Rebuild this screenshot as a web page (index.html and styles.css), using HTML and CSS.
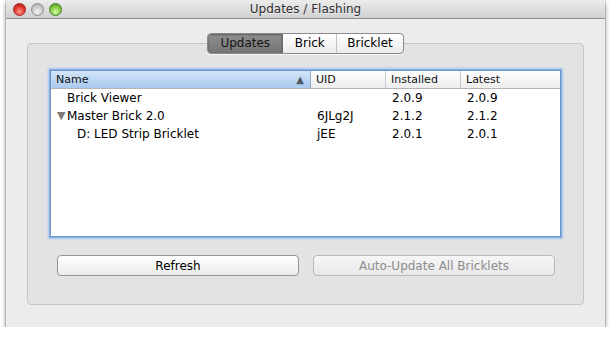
FILE: index.html
```html
<!DOCTYPE html>
<html lang="en">
<head>
    <meta charset="UTF-8">
    <title>Updates / Flashing</title>
    <link rel="stylesheet" href="styles.css">
</head>
<body>
    <div class="window">
        <div class="titlebar">
            <div class="lights">
                <span class="light red"></span>
                <span class="light grey"></span>
                <span class="light green"></span>
            </div>
            <span class="title">Updates / Flashing</span>
        </div>
        <div class="content">
            <div class="group">
                <div class="tabs">
                    <span class="tab active">Updates</span>
                    <span class="tab">Brick</span>
                    <span class="tab">Bricklet</span>
                </div>
                <div class="tree">
                    <div class="head">
                        <div class="hcell sorted">Name <span class="sort">&#9650;</span></div>
                        <div class="hcell">UID</div>
                        <div class="hcell">Installed</div>
                        <div class="hcell last">Latest</div>
                    </div>
                    <div class="row">
                        <div class="cell lvl1">Brick Viewer</div>
                        <div class="cell"></div>
                        <div class="cell">2.0.9</div>
                        <div class="cell">2.0.9</div>
                    </div>
                    <div class="row">
                        <div class="cell lvl1"><span class="arrow">&#9660;</span>Master Brick 2.0</div>
                        <div class="cell">6JLg2J</div>
                        <div class="cell">2.1.2</div>
                        <div class="cell">2.1.2</div>
                    </div>
                    <div class="row">
                        <div class="cell lvl2">D: LED Strip Bricklet</div>
                        <div class="cell">jEE</div>
                        <div class="cell">2.0.1</div>
                        <div class="cell">2.0.1</div>
                    </div>
                </div>
                <div class="buttons">
                    <button class="btn">Refresh</button>
                    <button class="btn disabled">Auto-Update All Bricklets</button>
                </div>
            </div>
        </div>
    </div>
</body>
</html>
```

FILE: styles.css
```css
body {
    margin: 0;
    background: #fff;
    font-family: "DejaVu Sans", sans-serif;
    font-size: 12px;
    color: #000;
}
.window {
    margin-left: 6px;
    width: 599px;
    height: 327px;
    background: #ececec;
    box-shadow: 0 0 0 1px rgba(0, 0, 0, 0.12), 0 3px 5px rgba(0, 0, 0, 0.45);
    display: flex;
    flex-direction: column;
}
.titlebar {
    height: 18px;
    border-bottom: 1px solid #8f8f8f;
    background: linear-gradient(#ececec, #d0d0d0);
    display: flex;
    align-items: center;
    justify-content: center;
    position: relative;
}
.title {
    color: #2e2e2e;
    font-size: 12px;
    text-shadow: 0 1px 0 rgba(255, 255, 255, 0.6);
}
.lights {
    position: absolute;
    left: 7px;
    top: 3px;
    display: flex;
    gap: 5px;
}
.light {
    width: 13px;
    height: 13px;
    border-radius: 50%;
    box-sizing: border-box;
}
.red {
    background: radial-gradient(circle at 50% 70%, #ff9a8a, #e0342a 55%, #a8130e);
    border: 1px solid #9a2a22;
}
.grey {
    background: radial-gradient(circle at 50% 70%, #f4f4f4, #c9c9c9 55%, #a0a0a0);
    border: 1px solid #8e8e8e;
}
.green {
    background: radial-gradient(circle at 50% 70%, #d6f7a8, #7ec63c 55%, #3f8a17);
    border: 1px solid #4a7f2a;
}
.content {
    flex: 1;
    padding: 24px 21px 22px 21px;
    display: flex;
}
.group {
    flex: 1;
    background: #e3e3e3;
    border: 1px solid #c6c6c6;
    border-radius: 4px;
    display: flex;
    flex-direction: column;
    align-items: center;
}
.tabs {
    margin-top: -11px;
    display: flex;
    border: 1px solid #8a8a8a;
    border-radius: 4px;
    background: linear-gradient(#ffffff, #ececec);
    box-shadow: 0 1px 0 rgba(255, 255, 255, 0.7);
    overflow: hidden;
}
.tab {
    height: 19px;
    line-height: 19px;
    padding: 0 10px;
    border-left: 1px solid #c2c2c2;
    font-size: 12px;
}
.tab:first-child {
    border-left: none;
}
.tab.active {
    background: linear-gradient(#8f8f8f, #747474);
    box-shadow: inset 0 1px 2px rgba(0, 0, 0, 0.35);
    color: #151515;
    width: 54px;
    text-align: center;
}
.tab:nth-child(2) {
    border-left: 1px solid #6a6a6a;
    width: 33px;
    text-align: center;
}
.tree {
    align-self: stretch;
    margin: 16px 22px 0 22px;
    height: 165px;
    background: #fff;
    border: 1px solid #6d96c8;
    box-shadow: 0 0 0 1px #86b0e3, 0 0 2px 2px #a7c7ee;
}
.head, .row {
    display: grid;
    grid-template-columns: 260px 75px 75px 1fr;
}
.head {
    height: 17px;
    border-bottom: 1px solid #b4b4b4;
    background: linear-gradient(#ffffff, #ededed);
    font-size: 11px;
}
.hcell {
    line-height: 17px;
    padding-left: 5px;
    border-right: 1px solid #c8c8c8;
    color: #111;
}
.hcell.last {
    border-right: none;
}
.hcell.sorted {
    background: linear-gradient(#d3e5f9, #a9c9ee);
    display: flex;
    justify-content: space-between;
    padding-right: 6px;
    border-right-color: #8fa9c8;
}
.sort {
    font-size: 10px;
    color: #4f5a66;
}
.row {
    height: 18px;
}
.cell {
    line-height: 18px;
    padding-left: 6px;
    white-space: nowrap;
}
.cell.lvl1 {
    padding-left: 16px;
    position: relative;
}
.cell.lvl2 {
    padding-left: 26px;
}
.arrow {
    position: absolute;
    left: 6px;
    font-size: 11px;
    color: #7b7b7b;
}
.buttons {
    align-self: stretch;
    margin: 18px 28px 0 29px;
    display: flex;
    gap: 14px;
}
.btn {
    flex: 1;
    height: 21px;
    border: 1px solid #959595;
    border-radius: 4px;
    background: linear-gradient(#ffffff, #ececec);
    font-family: "DejaVu Sans", sans-serif;
    font-size: 12px;
    color: #000;
    padding: 0;
}
.btn.disabled {
    color: #8c8c8c;
    border-color: #b8b8b8;
    background: linear-gradient(#f6f6f6, #e8e8e8);
}
```
